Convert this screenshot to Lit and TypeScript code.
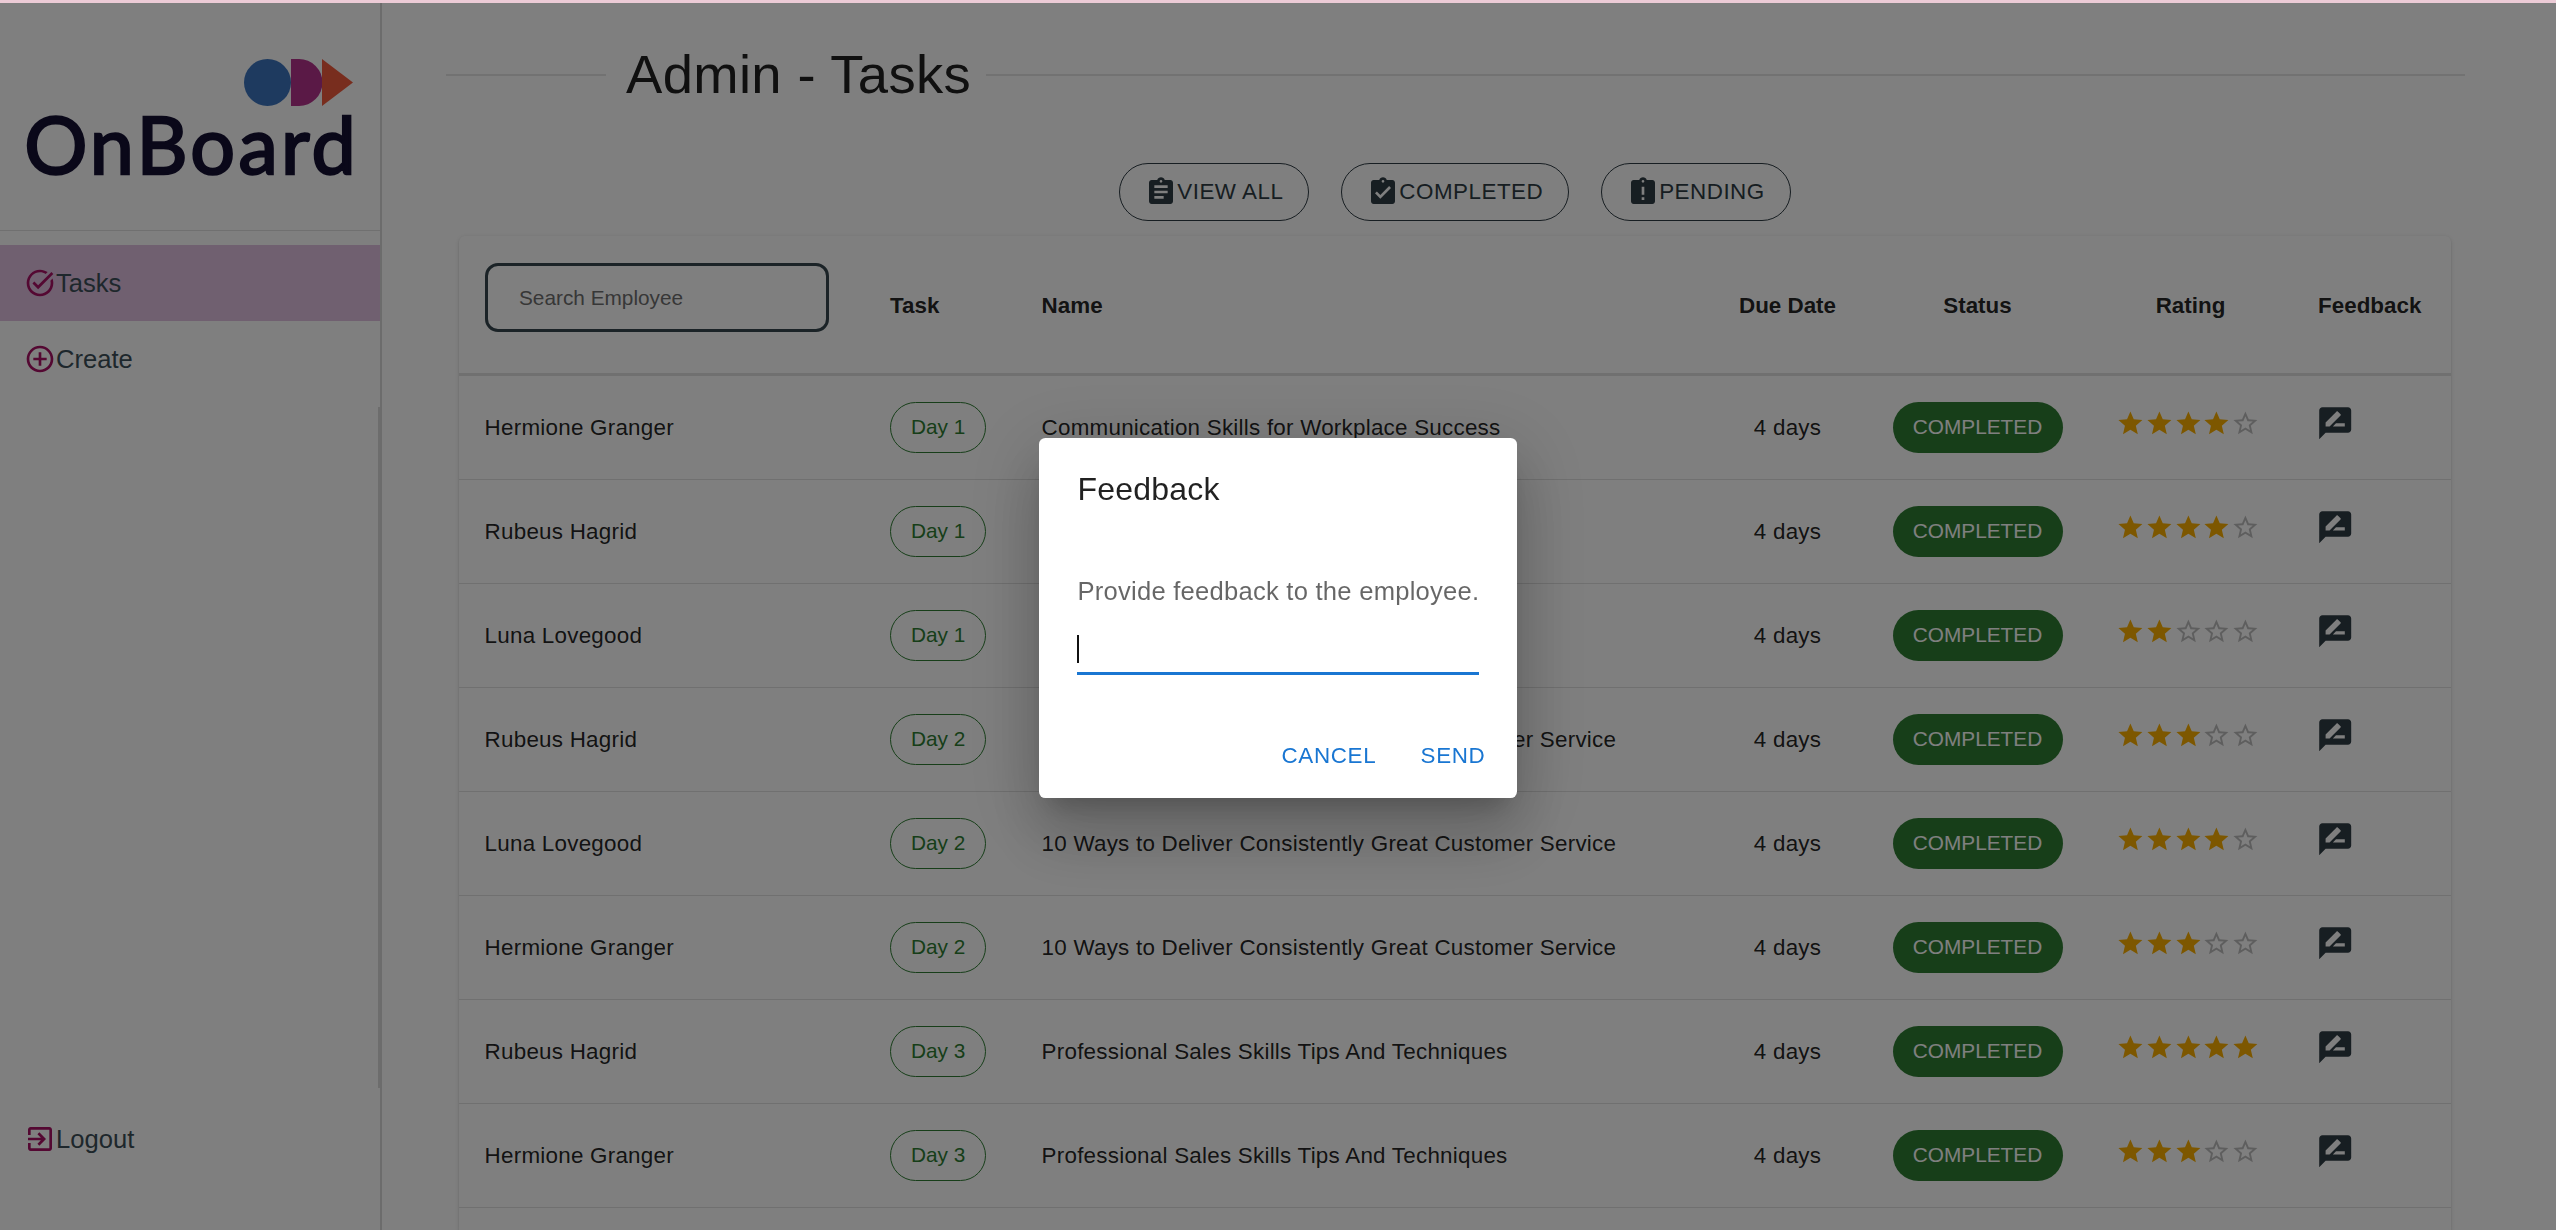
import { LitElement, html, css, svg } from 'lit';
import { customElement } from 'lit/decorators.js';

const ICONS = {
  taskAlt: 'M22 5.18 10.59 16.6l-4.24-4.24 1.41-1.41 2.83 2.83 10-10L22 5.18zm-2.21 5.04c.13.57.21 1.17.21 1.78 0 4.42-3.58 8-8 8s-8-3.58-8-8 3.58-8 8-8c1.58 0 3.04.46 4.28 1.25l1.44-1.44C16.1 2.67 14.13 2 12 2 6.48 2 2 6.48 2 12s4.48 10 10 10 10-4.48 10-10c0-1.19-.22-2.33-.6-3.39l-1.61 1.61z',
  add: 'M13 7h-2v4H7v2h4v4h2v-4h4v-2h-4V7zm-1-5C6.48 2 2 6.48 2 12s4.48 10 10 10 10-4.48 10-10S17.52 2 12 2zm0 18c-4.41 0-8-3.59-8-8s3.59-8 8-8 8 3.59 8 8-3.59 8-8 8z',
  exit: 'M10.09 15.59L11.5 17l5-5-5-5-1.41 1.41L12.67 11H3v2h9.67l-2.58 2.59zM19 3H5c-1.11 0-2 .9-2 2v4h2V5h14v14H5v-4H3v4c0 1.1.89 2 2 2h14c1.1 0 2-.9 2-2V5c0-1.1-.9-2-2-2z',
  assignment: 'M19 3h-4.18C14.4 1.84 13.3 1 12 1c-1.3 0-2.4.84-2.82 2H5c-1.1 0-2 .9-2 2v14c0 1.1.9 2 2 2h14c1.1 0 2-.9 2-2V5c0-1.1-.9-2-2-2zm-7 0c.55 0 1 .45 1 1s-.45 1-1 1-1-.45-1-1 .45-1 1-1zm2 14H7v-2h7v2zm3-4H7v-2h10v2zm0-4H7V7h10v2z',
  turnedIn: 'M19 3h-4.18C14.4 1.84 13.3 1 12 1c-1.3 0-2.4.84-2.82 2H5c-1.1 0-2 .9-2 2v14c0 1.1.9 2 2 2h14c1.1 0 2-.9 2-2V5c0-1.1-.9-2-2-2zm-7 0c.55 0 1 .45 1 1s-.45 1-1 1-1-.45-1-1 .45-1 1-1zm-2 14-4-4 1.41-1.41L10 14.17l6.59-6.59L18 9l-8 8z',
  late: 'M19 3h-4.18C14.4 1.84 13.3 1 12 1c-1.3 0-2.4.84-2.82 2H5c-1.1 0-2 .9-2 2v14c0 1.1.9 2 2 2h14c1.1 0 2-.9 2-2V5c0-1.1-.9-2-2-2zm-6 15h-2v-2h2v2zm0-4h-2V8h2v6zm-1-9c-.55 0-1-.45-1-1s.45-1 1-1 1 .45 1 1-.45 1-1 1z',
  review: 'M20 2H4c-1.1 0-1.99.9-1.99 2L2 22l4-4h14c1.1 0 2-.9 2-2V4c0-1.1-.9-2-2-2zM6 14v-2.47l6.88-6.88c.2-.2.51-.2.71 0l1.77 1.77c.2.2.2.51 0 .71L8.47 14H6zm12 0h-7.5l2-2H18v2z',
  star: 'M12 17.27L18.18 21l-1.64-7.03L22 9.24l-7.19-.61L12 2 9.19 8.63 2 9.24l5.46 4.73L5.82 21z',
  starBorder: 'M22 9.24l-7.19-.62L12 2 9.19 8.63 2 9.24l5.46 4.73L5.82 21 12 17.27 18.18 21l-1.63-7.03L22 9.24zM12 15.4l-3.76 2.27 1-4.28-3.32-2.88 4.38-.38L12 6.1l1.71 4.04 4.38.38-3.32 2.88 1 4.28L12 15.4z',
};

const icon = (d: string, cls: string) => html`<svg class=${cls} viewBox="0 0 24 24" fill="currentColor">${svg`<path d=${d}></path>`}</svg>`;

const ROWS = [
  { who: 'Hermione Granger', day: 'Day 1', task: 'Communication Skills for Workplace Success', rating: 4 },
  { who: 'Rubeus Hagrid', day: 'Day 1', task: 'Communication Skills for Workplace Success', rating: 4 },
  { who: 'Luna Lovegood', day: 'Day 1', task: 'Communication Skills for Workplace Success', rating: 2 },
  { who: 'Rubeus Hagrid', day: 'Day 2', task: '10 Ways to Deliver Consistently Great Customer Service', rating: 3 },
  { who: 'Luna Lovegood', day: 'Day 2', task: '10 Ways to Deliver Consistently Great Customer Service', rating: 4 },
  { who: 'Hermione Granger', day: 'Day 2', task: '10 Ways to Deliver Consistently Great Customer Service', rating: 3 },
  { who: 'Rubeus Hagrid', day: 'Day 3', task: 'Professional Sales Skills Tips And Techniques', rating: 5 },
  { who: 'Hermione Granger', day: 'Day 3', task: 'Professional Sales Skills Tips And Techniques', rating: 3 },
];

@customElement('app-root')
export class AppRoot extends LitElement {
  static styles = css`
    :host {
      display: block;
      height: 1230px;
      overflow: hidden;
      font-family: "Liberation Sans", Arial, sans-serif;
      color: rgba(0, 0, 0, 0.87);
      background: #fff;
    }
    .strip {
      position: fixed;
      top: 0;
      left: 0;
      right: 0;
      height: 3px;
      background: #eccbd6;
      z-index: 3;
    }
    .page {
      display: flex;
      height: 1230px;
    }

    .sidebar {
      position: relative;
      flex: none;
      width: 380px;
      display: flex;
      flex-direction: column;
      border-right: 2px solid #d8d8d8;
    }
    .rail {
      position: absolute;
      right: 0;
      top: 407px;
      width: 2px;
      height: 681px;
      background: #dadada;
    }
    .logo {
      height: 231px;
      box-sizing: border-box;
      padding: 59px 27px 0 0;
      display: flex;
      flex-direction: column;
      align-items: flex-end;
      border-bottom: 1px solid #e0e0e0;
    }
    .logo-mark {
      display: block;
      width: 109px;
      height: 47px;
    }
    .logo-word {
      font-family: Lato, "Liberation Sans", sans-serif;
      font-weight: 400;
      font-size: 79px;
      line-height: 68px;
      letter-spacing: 3.3px;
      -webkit-text-stroke: 2.4px #141032;
      color: #141032;
      margin: 4px -6px 0 0;
    }
    .nav {
      flex: 1;
      display: flex;
      flex-direction: column;
      padding: 14px 0 53px;
    }
    .nav-item {
      height: 76px;
      display: flex;
      align-items: center;
      padding-left: 24px;
      font-size: 25.6px;
      color: #3c4f58;
      flex: none;
    }
    .nav-item.active {
      background: #e0c0e0;
    }
    .nav-item.logout {
      margin-top: auto;
    }
    .nav-icon {
      width: 32px;
      height: 32px;
      color: #a81064;
      flex: none;
    }

    .main {
      flex: 1;
      min-width: 0;
      display: flex;
      flex-direction: column;
    }
    .title-row {
      display: flex;
      align-items: center;
      padding: 41px 91px 0 64px;
      height: 67px;
      box-sizing: content-box;
    }
    .title-line {
      height: 2px;
      margin-top: 1px;
      background: #e4e4e4;
      flex: 1;
    }
    .title-line.short {
      flex: none;
      width: 160px;
    }
    h1 {
      margin: 0 15px 0 20px;
      font-size: 54.4px;
      font-weight: 400;
      line-height: 67px;
      letter-spacing: 0.35px;
      color: #212121;
    }
    .filters {
      display: flex;
      justify-content: center;
      gap: 32px;
      padding: 55px 28px 15px 0;
    }
    .filter {
      height: 58px;
      box-sizing: border-box;
      display: flex;
      align-items: center;
      padding: 0 25px;
      border: 1.6px solid #2f3c44;
      border-radius: 29px;
      font-size: 22.4px;
      letter-spacing: 0.5px;
      color: #2f3c44;
    }
    .filter-icon {
      width: 32px;
      height: 32px;
      flex: none;
    }

    .paper {
      flex: 1;
      margin: 0 105px 0 77px;
      border-radius: 6px 6px 0 0;
      box-shadow: 0 3px 2px -2px rgba(0, 0, 0, 0.2), 0 1.6px 1.6px rgba(0, 0, 0, 0.14), 0 1.6px 5px rgba(0, 0, 0, 0.12);
    }
    .row {
      display: grid;
      grid-template-columns: 405.5px 151.5px 692.5px 158px 222px 204px 1fr;
      align-items: center;
      height: 104px;
      box-sizing: border-box;
      border-bottom: 1.6px solid #e0e0e0;
      font-size: 22.4px;
      letter-spacing: 0.24px;
    }
    .row.head {
      height: 140px;
      padding-top: 2px;
      border-bottom-width: 3px;
      font-weight: 700;
      letter-spacing: 0;
    }
    .cell {
      padding: 0 25.6px;
      white-space: nowrap;
    }
    .center {
      text-align: center;
      padding: 0;
    }
    .search {
      height: 69px;
      box-sizing: border-box;
      margin: 0 36px 16px 26px;
      padding: 0 31px;
      border: 3.2px solid #37474f;
      border-radius: 13px;
      display: flex;
      align-items: center;
      font-size: 20.8px;
      font-weight: 400;
      color: #6f6f6f;
    }
    .day {
      display: inline-flex;
      align-items: center;
      justify-content: center;
      width: 96px;
      height: 51px;
      padding-bottom: 1px;
      box-sizing: border-box;
      border: 1.6px solid #2e7d32;
      border-radius: 26px;
      color: #2e7d32;
      font-size: 20.8px;
      letter-spacing: 0;
    }
    .status {
      display: inline-flex;
      align-items: center;
      justify-content: center;
      width: 170px;
      height: 51px;
      padding-bottom: 1px;
      box-sizing: border-box;
      border-radius: 26px;
      background: #2e7d32;
      color: #fff;
      font-size: 20.8px;
      letter-spacing: 0;
    }
    .stars {
      display: flex;
      padding-left: 27.6px;
      margin-top: -8px;
    }
    .star {
      width: 28.8px;
      height: 28.8px;
      flex: none;
      color: #faaf00;
    }
    .star.empty {
      color: rgba(0, 0, 0, 0.26);
    }
    .review {
      display: block;
      width: 38.4px;
      height: 38.4px;
      color: #2f3c44;
      margin-left: -2px;
      margin-top: -8px;
    }

    .backdrop {
      position: fixed;
      top: 3px;
      left: 0;
      right: 0;
      bottom: 0;
      background: rgba(0, 0, 0, 0.5);
      z-index: 2;
      display: flex;
      align-items: center;
      justify-content: center;
      padding-top: 3px;
    }
    .dialog {
      width: 478px;
      height: 360px;
      box-sizing: border-box;
      padding-top: 25.6px;
      display: flex;
      flex-direction: column;
      background: #fff;
      border-radius: 6.4px;
      box-shadow: 0 17.6px 24px -11.2px rgba(0, 0, 0, 0.2), 0 38.4px 60.8px 4.8px rgba(0, 0, 0, 0.14), 0 14.4px 73.6px 12.8px rgba(0, 0, 0, 0.12);
    }
    .dialog-title {
      padding: 0 38.4px;
      font-size: 32px;
      line-height: 51.2px;
      letter-spacing: 0.24px;
      color: rgba(0, 0, 0, 0.87);
    }
    .dialog-text {
      margin-top: 57px;
      padding: 0 38.4px;
      font-size: 25.6px;
      line-height: 38.4px;
      letter-spacing: 0.24px;
      color: rgba(0, 0, 0, 0.6);
      white-space: nowrap;
    }
    .field {
      margin: 24px 38.5px 0 37.5px;
      height: 41px;
      box-sizing: border-box;
      border-bottom: 3px solid #1976d2;
      display: flex;
      align-items: flex-start;
    }
    .caret {
      width: 2px;
      height: 28px;
      margin-top: 1px;
      background: #111;
    }
    .actions {
      margin-top: auto;
      padding: 0 12.8px 13px;
      display: flex;
      justify-content: flex-end;
      gap: 12.8px;
    }
    .action {
      min-width: 102.4px;
      height: 58px;
      box-sizing: border-box;
      padding: 0 12.8px;
      display: flex;
      align-items: center;
      justify-content: center;
      color: #1976d2;
      font-size: 22.4px;
      letter-spacing: 0.64px;
    }
  `;

  renderStars(rating: number) {
    const stars = [1, 2, 3, 4, 5];
    return html`<div class="stars">
      ${stars.map((n) => n <= rating
        ? icon(ICONS.star, 'star')
        : icon(ICONS.starBorder, 'star empty'))}
    </div>`;
  }

  render() {
    return html`
      <div class="strip"></div>
      <div class="page">
        <aside class="sidebar">
          <div class="rail"></div>
          <div class="logo">
            <svg class="logo-mark" viewBox="0 0 109 47">
              <circle cx="23.5" cy="23.5" r="23.5" fill="#3c74be"></circle>
              <path d="M47 0h8a23.5 23.5 0 0 1 0 47h-8z" fill="#b4328c"></path>
              <path d="M78 0l31 23.5L78 47z" fill="#f05a3c"></path>
            </svg>
            <div class="logo-word">OnBoard</div>
          </div>
          <nav class="nav">
            <div class="nav-item active">${icon(ICONS.taskAlt, 'nav-icon')}Tasks</div>
            <div class="nav-item">${icon(ICONS.add, 'nav-icon')}Create</div>
            <div class="nav-item logout">${icon(ICONS.exit, 'nav-icon')}Logout</div>
          </nav>
        </aside>
        <main class="main">
          <div class="title-row">
            <div class="title-line short"></div>
            <h1>Admin - Tasks</h1>
            <div class="title-line"></div>
          </div>
          <div class="filters">
            <div class="filter">${icon(ICONS.assignment, 'filter-icon')}VIEW ALL</div>
            <div class="filter">${icon(ICONS.turnedIn, 'filter-icon')}COMPLETED</div>
            <div class="filter">${icon(ICONS.late, 'filter-icon')}PENDING</div>
          </div>
          <section class="paper">
            <div class="row head">
              <div class="search">Search Employee</div>
              <div class="cell">Task</div>
              <div class="cell">Name</div>
              <div class="center">Due Date</div>
              <div class="center">Status</div>
              <div class="center">Rating</div>
              <div class="cell">Feedback</div>
            </div>
            ${ROWS.map((r) => html`
              <div class="row">
                <div class="cell">${r.who}</div>
                <div class="cell"><span class="day">${r.day}</span></div>
                <div class="cell">${r.task}</div>
                <div class="center">4 days</div>
                <div class="center"><span class="status">COMPLETED</span></div>
                ${this.renderStars(r.rating)}
                <div class="cell">${icon(ICONS.review, 'review')}</div>
              </div>
            `)}
          </section>
        </main>
      </div>
      <div class="backdrop">
        <div class="dialog">
          <div class="dialog-title">Feedback</div>
          <div class="dialog-text">Provide feedback to the employee.</div>
          <div class="field"><div class="caret"></div></div>
          <div class="actions">
            <div class="action">CANCEL</div>
            <div class="action">SEND</div>
          </div>
        </div>
      </div>
    `;
  }
}
